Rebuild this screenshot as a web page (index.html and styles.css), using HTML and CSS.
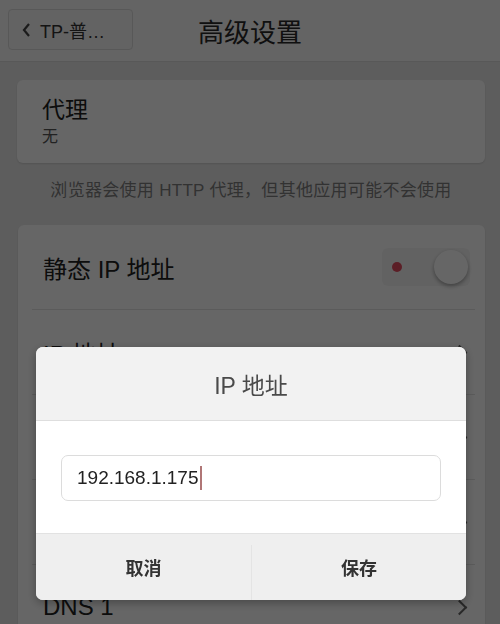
FILE: index.html
```html
<!DOCTYPE html>
<html lang="zh-CN">
<head>
  <meta charset="UTF-8">
  <meta name="viewport" content="width=device-width, initial-scale=1.0">
  <title>高级设置</title>
  <link rel="stylesheet" href="styles.css">
</head>
<body>
  <header class="top-bar">
    <button class="back-button">
      <svg class="back-icon" width="10" height="16" viewBox="0 0 10 16"><path d="M8 2 L3 8 L8 14" fill="none" stroke="currentColor" stroke-width="2.2"/></svg>
      <span>TP-普…</span>
    </button>
    <h1 class="title">高级设置</h1>
  </header>

  <main class="content">
    <section class="card proxy-card">
      <div class="proxy-label">代理</div>
      <div class="proxy-value">无</div>
    </section>

    <p class="hint">浏览器会使用 HTTP 代理，但其他应用可能不会使用</p>

    <section class="card list-card">
      <div class="row">
        <span class="row-label">静态 IP 地址</span>
        <span class="switch"><span class="switch-dot"></span><span class="switch-knob"></span></span>
      </div>
      <div class="row">
        <span class="row-label">IP 地址</span>
        <span class="chevron"></span>
      </div>
      <div class="row">
        <span class="row-label">网关</span>
        <span class="chevron"></span>
      </div>
      <div class="row">
        <span class="row-label">网络前缀长度</span>
        <span class="chevron"></span>
      </div>
      <div class="row">
        <span class="row-label">DNS 1</span>
        <span class="chevron"></span>
      </div>
    </section>
  </main>

  <div class="overlay">
    <div class="dialog">
      <div class="dialog-title">IP 地址</div>
      <div class="dialog-body">
        <div class="input-box">192.168.1.175<span class="caret"></span></div>
      </div>
      <div class="dialog-actions">
        <button class="action">取消</button>
        <button class="action">保存</button>
      </div>
    </div>
  </div>
</body>
</html>
```

FILE: styles.css
```css
html, body {
  margin: 0;
  height: 100%;
  overflow: hidden;
}

body {
  font-family: "Liberation Sans", "Noto Sans CJK SC", sans-serif;
  background-color: #e9e9e9;
  color: #222;
}

.top-bar {
  height: 62px;
  display: flex;
  align-items: center;
  justify-content: center;
  position: relative;
  background-color: #fafafa;
  border-bottom: 1px solid #dcdcdc;
  box-sizing: border-box;
}

.back-button {
  position: absolute;
  left: 8px;
  top: 9px;
  width: 125px;
  height: 41px;
  display: flex;
  align-items: center;
  gap: 9px;
  padding: 0 0 0 12px;
  border: 1px solid #dcdcdc;
  border-radius: 4px;
  background-color: #f7f7f7;
  font-family: inherit;
  font-size: 18px;
  color: #333;
}

.back-icon {
  color: #444;
}

.title {
  margin: 0;
  font-size: 26px;
  font-weight: normal;
  color: #2a2a2a;
}

.content {
  padding: 18px 15px 0 17px;
}

.card {
  background-color: #fff;
  border-radius: 6px;
  box-shadow: 0 1px 2px rgba(0, 0, 0, 0.12);
}

.proxy-card {
  height: 83px;
  padding: 15px 25px 0;
  box-sizing: border-box;
}

.proxy-label {
  font-size: 23px;
  line-height: 30px;
  color: #222;
}

.proxy-value {
  font-size: 16px;
  line-height: 24px;
  color: #555;
}

.hint {
  margin: 0;
  height: 62px;
  padding-bottom: 12px;
  box-sizing: border-box;
  display: flex;
  align-items: center;
  justify-content: center;
  font-size: 17px;
  letter-spacing: 0.3px;
  color: #7d7d7d;
}

.list-card {
  margin-left: 1px;
  padding: 0 10px 0 14px;
}

.row {
  height: 84px;
  display: flex;
  align-items: center;
  justify-content: space-between;
  padding: 0 0 0 11px;
  border-bottom: 1px solid #e4e4e4;
}

.row-label {
  font-size: 24px;
  color: #222;
}

.switch {
  width: 88px;
  height: 38px;
  position: relative;
  border-radius: 6px;
  background-color: #f6f6f6;
  margin-right: 5px;
}

.switch-dot {
  position: absolute;
  left: 10px;
  top: 14px;
  width: 10px;
  height: 10px;
  border-radius: 50%;
  background-color: #e34b5f;
}

.switch-knob {
  position: absolute;
  right: 2px;
  top: 2px;
  width: 34px;
  height: 34px;
  border-radius: 50%;
  background-color: #fff;
  box-shadow: 0 2px 4px rgba(0, 0, 0, 0.35);
}

.chevron {
  width: 9px;
  height: 9px;
  border-top: 2px solid #666;
  border-right: 2px solid #666;
  transform: rotate(45deg);
  margin-right: 10px;
}

.overlay {
  position: fixed;
  inset: 0;
  background-color: rgba(0, 0, 0, 0.6);
  padding: 347px 34px 0 36px;
}

.dialog {
  width: 430px;
  border-radius: 7px;
  overflow: hidden;
  background-color: #fff;
  box-shadow: 0 3px 10px rgba(0, 0, 0, 0.3);
}

.dialog-title {
  height: 74px;
  display: flex;
  align-items: center;
  justify-content: center;
  background-color: #f2f2f2;
  border-bottom: 1px solid #dedede;
  font-size: 23px;
  color: #4a4a4a;
  box-sizing: border-box;
}

.dialog-body {
  height: 113px;
  padding: 34px 25px 0;
  box-sizing: border-box;
  border-bottom: 1px solid #e2e2e2;
}

.input-box {
  height: 46px;
  display: flex;
  align-items: center;
  padding-left: 15px;
  border: 1px solid #dcdcdc;
  border-radius: 7px;
  font-size: 19px;
  color: #222;
  box-sizing: border-box;
}

.caret {
  width: 2px;
  height: 24px;
  margin-left: 1px;
  background-color: #b07676;
}

.dialog-actions {
  height: 66px;
  display: grid;
  grid-template-columns: 1fr 1fr;
  background-color: #efefef;
}

.action {
  border: none;
  background: transparent;
  font-family: inherit;
  font-size: 18px;
  font-weight: bold;
  color: #333;
  padding: 0;
}

.action + .action {
  border-left: 1px solid #e4e4e4;
  margin-top: 11px;
  padding-bottom: 11px;
}
```
